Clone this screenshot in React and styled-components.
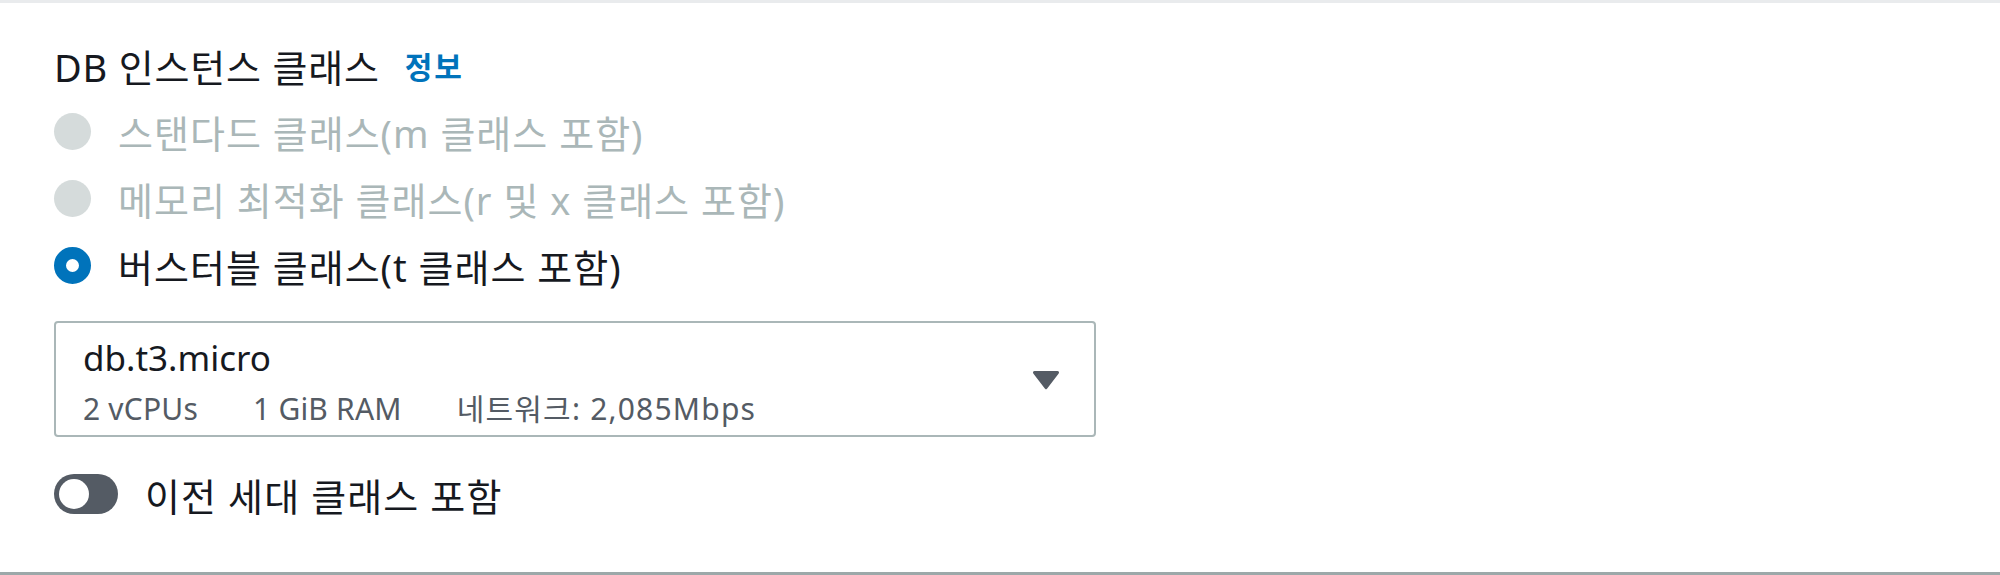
import React from "react";
import styled, { createGlobalStyle } from "styled-components";

const GlobalStyle = createGlobalStyle`
  html, body { margin: 0; padding: 0; background: #ffffff; }
  body { font-family: "Noto Sans", "Noto Sans CJK KR", sans-serif; }
`;

const Panel = styled.section`
  box-sizing: border-box;
  width: 2000px;
  height: 575px;
  border-top: 3px solid #e9ebed;
  border-bottom: 3px solid #9ca8a9;
  padding: 42px 0 0 54px;
  display: flex;
  flex-direction: column;
  align-items: flex-start;
`;

const FieldLabel = styled.div`
  display: flex;
  align-items: center;
  gap: 25px;
  height: 40px;
  font-size: 38px;
  letter-spacing: 0.8px;
  color: #16191f;
`;

const InfoLink = styled.a`
  font-size: 30px;
  font-weight: 700;
  letter-spacing: 1.8px;
  color: #0073bb;
  text-decoration: none;
`;

const RadioGroup = styled.div`
  margin-top: 13px;
  display: flex;
  flex-direction: column;
`;

const RadioRow = styled.label`
  display: flex;
  align-items: center;
  gap: 27px;
  height: 67px;
  font-size: 38px;
  letter-spacing: 1px;
  color: ${(p) => (p.$disabled ? "#aab7b8" : "#16191f")};
`;

const RadioDot = styled.span`
  box-sizing: border-box;
  width: 37px;
  height: 37px;
  border-radius: 50%;
  flex: none;
  background: ${(p) => (p.$checked ? "#ffffff" : "#d5dbdb")};
  border: ${(p) => (p.$checked ? "12px solid #0073bb" : "none")};
`;

const Select = styled.div`
  box-sizing: border-box;
  margin-top: 22px;
  width: 1042px;
  height: 116px;
  border: 2px solid #aab7b8;
  border-radius: 4px;
  padding: 14px 34px 0 27px;
  display: flex;
  align-items: flex-start;
  justify-content: space-between;
`;

const SelectText = styled.div`
  display: flex;
  flex-direction: column;
`;

const SelectTitle = styled.div`
  font-size: 35px;
  line-height: 42px;
  color: #16191f;
`;

const SelectDesc = styled.div`
  margin-top: 13px;
  display: flex;
  gap: 55px;
  font-size: 30px;
  line-height: 34px;
  color: #545b64;
`;

const DescItem = styled.span`
  letter-spacing: ${(p) => (p.$wide ? "1.2px" : "0.2px")};
`;

const Caret = styled.svg`
  margin-top: 32px;
  width: 28px;
  height: 22px;
  flex: none;
`;

const ToggleRow = styled.label`
  margin-top: 37px;
  display: flex;
  align-items: center;
  gap: 27px;
  height: 40px;
  font-size: 38px;
  letter-spacing: 1.1px;
  color: #16191f;
`;

const Toggle = styled.span`
  box-sizing: border-box;
  width: 64px;
  height: 40px;
  border-radius: 20px;
  background: #545b64;
  padding: 5px;
  display: flex;
  align-items: center;
  flex: none;
`;

const Knob = styled.span`
  width: 30px;
  height: 30px;
  border-radius: 50%;
  background: #ffffff;
`;

const options = [
  { text: "스탠다드 클래스(m 클래스 포함)", disabled: true },
  { text: "메모리 최적화 클래스(r 및 x 클래스 포함)", disabled: true },
  { text: "버스터블 클래스(t 클래스 포함)", checked: true },
];

export default function App() {
  return (
    <>
      <GlobalStyle />
      <Panel>
        <FieldLabel>
          <span>DB 인스턴스 클래스</span>
          <InfoLink href="#">정보</InfoLink>
        </FieldLabel>
        <RadioGroup>
          {options.map((o) => (
            <RadioRow key={o.text} $disabled={o.disabled}>
              <RadioDot $checked={o.checked} />
              <span>{o.text}</span>
            </RadioRow>
          ))}
        </RadioGroup>
        <Select>
          <SelectText>
            <SelectTitle>db.t3.micro</SelectTitle>
            <SelectDesc>
              <DescItem>2 vCPUs</DescItem>
              <DescItem>1 GiB RAM</DescItem>
              <DescItem $wide>네트워크: 2,085Mbps</DescItem>
            </SelectDesc>
          </SelectText>
          <Caret viewBox="0 0 28 22">
            <path
              d="M2.5 2h23a1.5 1.5 0 0 1 1.2 2.4L15.2 19.6a1.5 1.5 0 0 1-2.4 0L1.3 4.4A1.5 1.5 0 0 1 2.5 2z"
              fill="#545b64"
            />
          </Caret>
        </Select>
        <ToggleRow>
          <Toggle>
            <Knob />
          </Toggle>
          <span>이전 세대 클래스 포함</span>
        </ToggleRow>
      </Panel>
    </>
  );
}
